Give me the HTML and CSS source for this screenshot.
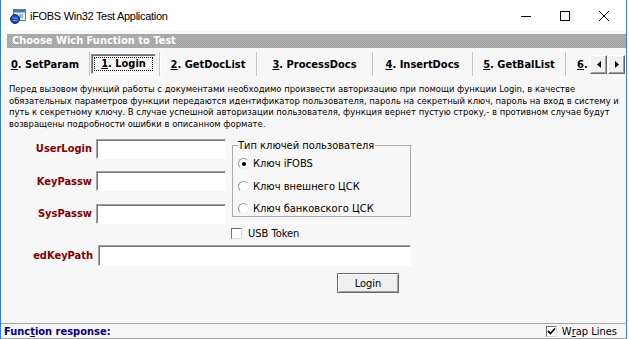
FILE: index.html
```html
<!DOCTYPE html>
<html lang="ru">
<head>
  <meta charset="UTF-8" />
  <meta name="viewport" content="width=device-width, initial-scale=1.0"/>
  <title>iFOBS Win32 Test Application</title>
  <link rel="stylesheet" href="styles.css">
</head>
<body>
  <div class="window">
    <div class="titlebar">
      <svg class="app-icon" width="16" height="16" viewBox="0 0 16 16">
        <rect x="3.5" y="1.5" width="12" height="11" fill="#e8eef6" stroke="#6b7b8f"/>
        <rect x="4" y="2" width="11" height="2.5" fill="#4a78b8"/>
        <rect x="9" y="6" width="4" height="4" fill="#9fb3cc"/>
        <circle cx="5" cy="11" r="4.5" fill="#1d4fa8" stroke="#0e2f70"/>
        <path d="M2.5 9.5c1.5 1 3 0 5 1M3 12.5c1.5-.5 3 .5 4.5 0" stroke="#7fb0ef" fill="none"/>
      </svg>
      <span class="title">iFOBS Win32 Test Application</span>
      <div class="controls">
        <svg class="ctl" width="10" height="10" viewBox="0 0 10 10"><path d="M0 5.5h10" stroke="#000"/></svg>
        <svg class="ctl" width="10" height="10" viewBox="0 0 10 10"><rect x="0.5" y="0.5" width="9" height="9" fill="none" stroke="#000"/></svg>
        <svg class="ctl" width="10" height="10" viewBox="0 0 10 10"><path d="M0 0l10 10M10 0L0 10" stroke="#000"/></svg>
      </div>
    </div>

    <div class="client">
      <div class="caption">Choose Wich Function to Test</div>

      <div class="tabs">
        <div class="tab tab-0"><span><u>0</u>. SetParam</span></div>
        <div class="tab tab-1"><span class="focused"><u>1</u>. Login</span></div>
        <div class="tab tab-2"><span><u>2</u>. GetDocList</span></div>
        <div class="tab tab-3"><span><u>3</u>. ProcessDocs</span></div>
        <div class="tab tab-4"><span><u>4</u>. InsertDocs</span></div>
        <div class="tab tab-5"><span><u>5</u>. GetBalList</span></div>
        <div class="tab tab-6"><span><u>6</u>.</span></div>
        <div class="arrows">
          <div class="arrow-btn"><svg width="4" height="7" viewBox="0 0 4 7"><path d="M4 0v7L0 3.5z" fill="#000"/></svg></div>
          <div class="arrow-btn"><svg width="4" height="7" viewBox="0 0 4 7"><path d="M0 0v7l4-3.5z" fill="#000"/></svg></div>
        </div>
      </div>

      <p class="desc">
        Перед вызовом функций работы с документами необходимо произвести авторизацию при помощи функции Login, в качестве<br>
        обязательных параметров функции передаются идентификатор пользователя, пароль на секретный ключ, пароль на вход в систему и<br>
        путь к секретному ключу. В случае успешной авторизации пользователя, функция вернет пустую строку,- в противном случае будут<br>
        возвращены подробности ошибки в описанном формате.
      </p>

      <div class="top-block">
        <div class="fields">
          <div class="field"><label>UserLogin</label><input type="text"></div>
          <div class="field"><label>KeyPassw</label><input type="text"></div>
          <div class="field"><label>SysPassw</label><input type="text"></div>
        </div>
        <div class="side">
          <fieldset class="key-type">
            <legend>Тип ключей пользователя</legend>
            <div class="radio-list">
              <div class="radio"><span class="dot checked"></span>Ключ iFOBS</div>
              <div class="radio"><span class="dot"></span>Ключ внешнего ЦСК</div>
              <div class="radio"><span class="dot"></span>Ключ банковского ЦСК</div>
            </div>
          </fieldset>
          <div class="check usb"><span class="box"></span>USB Token</div>
        </div>
      </div>

      <div class="field key-path"><label>edKeyPath</label><input type="text"></div>

      <div class="actions"><button class="btn">Login</button></div>

      <div class="response">
        <span class="response-title">Func<u>t</u>ion response:</span>
        <div class="check wrap"><span class="box ticked"><svg width="9" height="9" viewBox="0 0 9 9"><path d="M1 4l2.5 2.5L8 1.5" stroke="#000" stroke-width="1.8" fill="none"/></svg></span>W<u>r</u>ap Lines</div>
      </div>
    </div>
  </div>
</body>
</html>
```

FILE: styles.css
```css
body {
  margin: 0;
  background: #fff;
  font-family: "DejaVu Sans Condensed", "Liberation Sans", sans-serif;
  font-size: 11px;
  color: #000;
}

.window {
  width: 625px;
  height: 339px;
  border-left: 1px solid #3b7dd3;
  border-right: 1px solid #3b7dd3;
  display: flex;
  flex-direction: column;
  overflow: hidden;
}

/* title bar */
.titlebar {
  height: 31px;
  flex-shrink: 0;
  display: flex;
  align-items: center;
  background: #fff;
}

.app-icon {
  margin-left: 9px;
  margin-top: 1px;
}

.title {
  margin-left: 4px;
  font-family: "Liberation Sans", sans-serif;
  font-size: 11px;
  letter-spacing: -0.3px;
}

.controls {
  margin-left: auto;
  margin-right: 17px;
  display: flex;
  gap: 29px;
}

/* client area */
.client {
  flex: 1;
  display: flex;
  flex-direction: column;
  background: #f7f7f7;
}

.caption {
  margin: 3px 0 0 6px;
  height: 14px;
  line-height: 14px;
  padding-left: 5px;
  background: repeating-conic-gradient(#a2a2a2 0 25%, #b0b0b0 0 50%) 0 0 / 2px 2px;
  color: #fff;
  font-weight: bold;
}

/* tabs */
.tabs {
  display: flex;
  height: 24px;
  margin-top: 4px;
}

.tab {
  display: flex;
  align-items: center;
  justify-content: center;
  font-weight: bold;
  white-space: nowrap;
  overflow: hidden;
  border-left: 1px solid #c4c4c4;
  box-shadow: inset 1px 0 #fff;
  box-sizing: border-box;
}

.tab-0 { width: 88px; border-left: none; box-shadow: none; }
.tab-1 { width: 70px; }
.tab-2 { width: 97px; }
.tab-3 { width: 116px; }
.tab-4 { width: 100px; }
.tab-5 { width: 93px; }
.tab-6 { width: 25px; justify-content: flex-start; padding-left: 11px; }

.focused {
  position: relative;
  height: 18px;
  line-height: 18px;
  padding: 0 9px;
  margin-right: 2px;
  border: 1px solid;
  border-color: #8a8a8a #ffffff #ffffff #8a8a8a;
  box-shadow: inset 1px 1px #6a6a6a;
}

.focused::after {
  content: "";
  position: absolute;
  inset: 2px;
  border: 1px dotted #000;
}

.arrows {
  display: flex;
  align-self: center;
  width: 35px;
}

.arrow-btn {
  width: 17px;
  height: 19px;
  box-sizing: border-box;
  display: flex;
  align-items: center;
  justify-content: center;
  background: #f0f0f0;
  border: 1px solid;
  border-color: #fff #6a6a6a #6a6a6a #fff;
  box-shadow: inset -1px -1px #a0a0a0;
}

.arrow-btn + .arrow-btn {
  margin-left: 1px;
}

/* description */
.desc {
  margin: 7px 0 0 8px;
  font-size: 9.4px;
  line-height: 11.67px;
  white-space: nowrap;
}

/* form */
.top-block {
  display: flex;
  margin-top: 9px;
}

.fields {
  display: flex;
  flex-direction: column;
  gap: 12.5px;
  padding-top: 0.3px;
}

.field {
  display: flex;
  align-items: center;
}

.field label {
  width: 91px;
  text-align: right;
  font-weight: bold;
  color: #800000;
}

.field input {
  width: 130px;
  height: 20px;
  margin: 0 0 0 4px;
  padding: 0;
  box-sizing: border-box;
  background: #fff;
  border: 1px solid;
  border-color: #a0a0a0 #fff #fff #a0a0a0;
  box-shadow: inset 1px 1px #787878;
}

.side {
  margin-left: 6px;
}

.key-type {
  width: 179px;
  height: 78px;
  box-sizing: border-box;
  margin: 0;
  padding: 0 0 0 5px;
  border: 1px solid #aaaaaa;
}

.key-type legend {
  padding: 0 1px 0 0;
  line-height: 13px;
}

.radio-list {
  display: flex;
  flex-direction: column;
  gap: 9.5px;
  padding-top: 5.5px;
}

.radio {
  display: flex;
  align-items: center;
  height: 13px;
}

.dot {
  width: 11px;
  height: 11px;
  box-sizing: border-box;
  margin-right: 4px;
  border-radius: 50%;
  border: 1px solid;
  border-color: #9a9a9a #eeeeee #eeeeee #9a9a9a;
  background: #fff;
  display: flex;
  align-items: center;
  justify-content: center;
}

.dot.checked::after {
  content: "";
  width: 4px;
  height: 4px;
  border-radius: 50%;
  background: #000;
}

.check {
  display: flex;
  align-items: center;
  height: 13px;
}

.box {
  width: 11px;
  height: 11px;
  box-sizing: border-box;
  background: #fff;
  border: 1px solid;
  border-color: #707070 #d8d8d8 #d8d8d8 #707070;
  display: flex;
  align-items: center;
  justify-content: center;
}

.usb {
  margin: 10px 0 0 -1px;
}

.usb .box {
  margin-right: 6px;
}

.key-path {
  margin-top: 5.5px;
}

.key-path label {
  width: 92px;
}

.key-path input {
  width: 313px;
  height: 21px;
  margin-left: 5px;
}

.actions {
  margin: 7px 0 0 336px;
}

.btn {
  width: 62px;
  height: 20px;
  padding: 0;
  font-family: inherit;
  font-size: 11px;
  background: #f0f0f0;
  border: 1px solid #6b6b6b;
  box-shadow: inset 1px 1px #fff, inset -1px -1px #a0a0a0;
}

/* response panel */
.response {
  margin-top: auto;
  height: 16px;
  padding-top: 1px;
  box-sizing: border-box;
  border-top: 1px solid #a8a8a8;
  border-bottom: 1px solid #a8a8a8;
  display: flex;
  align-items: center;
}

.response-title {
  margin-left: 3px;
  font-weight: bold;
  color: #000080;
}

.wrap {
  margin-left: auto;
  margin-right: 9px;
}

.wrap .box {
  margin-right: 5px;
}
```
